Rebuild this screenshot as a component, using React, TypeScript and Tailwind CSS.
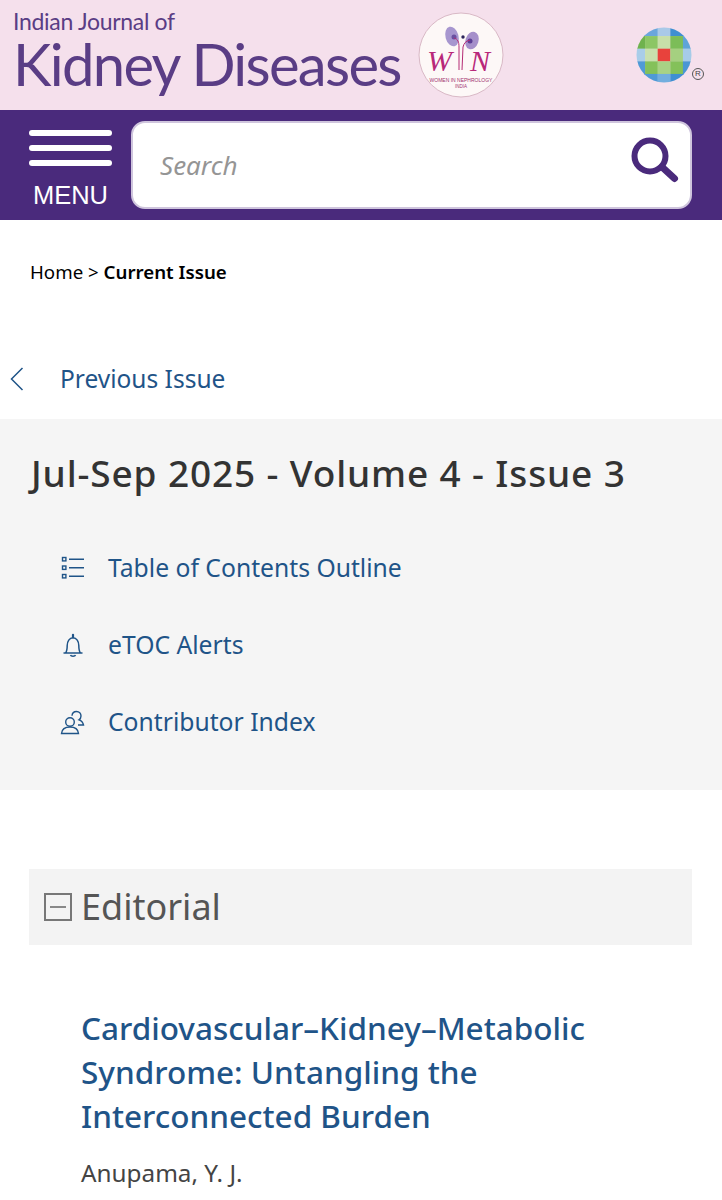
const links = [
  { label: 'Table of Contents Outline', icon: <ListIcon /> },
  { label: 'eTOC Alerts', icon: <BellIcon /> },
  { label: 'Contributor Index', icon: <PeopleIcon /> },
];

function ListIcon() {
  return (
    <svg width="24" height="24" viewBox="0 0 24 24" fill="none" stroke="#1f5488" strokeWidth="1.4">
      <rect x="1.500" y="1.500" width="3.400" height="3.400" />
      <rect x="1.500" y="10" width="3.400" height="3.400" />
      <rect x="1.500" y="18.500" width="3.400" height="3.400" />
      <path d="M8 3.200h15M8 11.700h15M8 20.200h15" />
    </svg>
  );
}

function BellIcon() {
  return (
    <svg width="24" height="26" viewBox="0 0 24 26" fill="none" stroke="#1f5488" strokeWidth="1.5">
      <path d="M2.500 21h19M4.500 21c1.500-1.800 1.700-4 1.700-7.500 0-4.200 2.200-7.700 5.800-7.700s5.800 3.500 5.800 7.700c0 3.500.2 5.700 1.700 7.500" />
      <path d="M12 5.500V2.800" strokeWidth="2.200" strokeLinecap="round" />
      <path d="M9.500 23c.5 1.700 4.500 1.700 5 0" />
    </svg>
  );
}

function PeopleIcon() {
  return (
    <svg width="26" height="26" viewBox="0 0 26 26" fill="none" stroke="#1f5488" strokeWidth="1.4">
      <circle cx="10" cy="13" r="4.300" />
      <path d="M1.500 24.500c.4-4 3-6.500 8.500-6.500s8.100 2.500 8.500 6.500z" />
      <path d="M12 6.800c.2-2.600 2-4.300 4.500-4.300 2.700 0 4.500 2 4.500 4.500 0 1.700-.8 3-2 3.800 2.600.8 4 2.600 4.500 5.200h-5.500" />
    </svg>
  );
}

function WinBadge() {
  return (
    <svg width="86" height="86" viewBox="0 0 86 86" className="shrink-0">
      <circle cx="43" cy="43" r="42" fill="#fdf8f7" stroke="#d9b9c6" strokeWidth="1" />
      <ellipse cx="34" cy="24.500" rx="6.500" ry="10" fill="#a796cf" transform="rotate(-15 34 24.500)" />
      <ellipse cx="54" cy="28.500" rx="6.500" ry="9" fill="#a58fca" transform="rotate(18 54 28.500)" />
      <circle cx="36" cy="25" r="2.500" fill="#6a4fa0" />
      <circle cx="52" cy="29" r="2.500" fill="#5b3f95" />
      <circle cx="45" cy="25" r="1.700" fill="#2b2359" />
      <path d="M36 26c4 1 5 4 5 9v23M52 28c-4 1-6 3-7 7l-1 23" fill="none" stroke="#b52b74" strokeWidth="1" />
      <text x="9" y="59" fill="#b8287a" fontSize="30" fontStyle="italic" fontFamily="Liberation Serif, serif">
        W
      </text>
      <text x="52" y="59" fill="#b8287a" fontSize="30" fontStyle="italic" fontFamily="Liberation Serif, serif">
        N
      </text>
      <text x="43" y="70" textAnchor="middle" fill="#a0306f" fontSize="5" fontFamily="Liberation Sans, sans-serif">
        WOMEN IN NEPHROLOGY
      </text>
      <text x="43" y="76" textAnchor="middle" fill="#a0306f" fontSize="4.500" fontFamily="Liberation Sans, sans-serif">
        INDIA
      </text>
    </svg>
  );
}

function Globe() {
  const rows = [
    ['#3f8fd2', '#6aa6dc', '#a9c9e8', '#3f8fd2', '#3f8fd2'],
    ['#6fb24e', '#8cc665', '#c7dfa9', '#7cbd58', '#5ea4d8'],
    ['#a9cde9', '#c9e0ae', '#e8423c', '#a5d080', '#a6cbe8'],
    ['#4f9ad6', '#84c15a', '#a8d285', '#84c15a', '#4a96d4'],
    ['#2c7cc4', '#4f9ad6', '#72aede', '#3f8fd2', '#2c7cc4'],
  ];
  return (
    <div className="relative">
      <svg width="56" height="56" viewBox="0 0 55 55">
        <defs>
          <clipPath id="globe-clip">
            <circle cx="27.500" cy="27.500" r="27" />
          </clipPath>
        </defs>
        <g clipPath="url(#globe-clip)">
          {rows.map((r, y) => r.map((c, x) => <rect key={x + '-' + y} x={x * 12.400 - 3.500} y={y * 12.400 - 3.500} width="12.600" height="12.600" fill={c} />))}
        </g>
      </svg>
      <span className="absolute -right-[12px] bottom-[3px] flex h-[12px] w-[12px] items-center justify-center rounded-full border border-[#555] text-[8px] leading-none text-[#444] font-['Liberation_Sans',sans-serif]">
        R
      </span>
    </div>
  );
}

export default function App() {
  return (
    <div className="min-h-[1200px] h-[1200px] overflow-hidden bg-white font-['Noto_Sans',sans-serif]">
      <header className="flex h-[110px] items-center justify-between bg-[#f5e0ec] pl-[13px] pr-[30px]">
        <div className="flex items-center gap-[17px]">
          <div className="w-[388px] font-['Lato',sans-serif] text-[#5a3d85]">
            <div className="mt-[-7px] text-[23px] leading-[24px] tracking-[-0.3px]">Indian Journal of</div>
            <div className="text-[58px] leading-[62px] tracking-[-1.7px] whitespace-nowrap">Kidney Diseases</div>
          </div>
          <WinBadge />
        </div>
        <Globe />
      </header>

      <nav className="flex h-[110px] items-center gap-[19px] bg-[#4a2a7c] pl-[29px] pr-[30px]">
        <button className="flex w-[83px] flex-col items-center pt-[9px]">
          <span className="flex w-full flex-col gap-[9px]">
            <span className="h-[6px] rounded-full bg-white" />
            <span className="h-[6px] rounded-full bg-white" />
            <span className="h-[6px] rounded-full bg-white" />
          </span>
          <span className="mt-[14px] font-['Liberation_Sans',sans-serif] text-[25.500px] leading-[30px] text-white">MENU</span>
        </button>
        <div className="flex h-[88px] flex-1 items-center justify-between rounded-[14px] border-2 border-[#cfc5dd] bg-white pl-[27px]">
          <span className="text-[26px] italic text-[#959595]">Search</span>
          <svg width="64" height="56" viewBox="0 0 64 56" fill="none" stroke="#4a2a7c" strokeWidth="6" strokeLinecap="round">
            <circle cx="24" cy="19" r="15.500" />
            <path d="M36 30l12.500 11.500" strokeWidth="7" />
          </svg>
        </div>
      </nav>

      <div className="pl-[30px] pt-[39px] text-[18.700px] leading-[26px] text-black">
        Home &gt; <span className="font-semibold">Current Issue</span>
      </div>

      <a className="mt-[74px] flex h-[40px] items-center text-[24.500px] text-[#1f5488]">
        <svg width="14" height="24" viewBox="0 0 14 24" fill="none" stroke="#1f5488" strokeWidth="1.500" className="ml-[10px]">
          <path d="M12.500 1L1.500 12l11 11" />
        </svg>
        <span className="ml-[36px]">Previous Issue</span>
      </a>

      <section className="mt-[20px] h-[371px] bg-[#f5f5f5] pl-[31px] pt-[30px]">
        <h1 className="text-[37px] font-medium leading-[48px] tracking-[0.87px] text-[#333]">Jul-Sep 2025 - Volume 4 - Issue 3</h1>
        <ul className="mt-[51px] flex flex-col gap-[37px] pl-[29px]">
          {links.map((l) => (
            <li key={l.label} className="flex h-[40px] items-center gap-[22px] text-[24.700px] text-[#1f5488]">
              <span className="flex w-[26px] justify-center">{l.icon}</span>
              {l.label}
            </li>
          ))}
        </ul>
      </section>

      <div className="ml-[29px] mr-[30px] mt-[79px] flex h-[76px] items-center gap-[9px] bg-[#f3f3f3] pl-[15px]">
        <span className="flex h-[28px] w-[28px] items-center justify-center border-2 border-[#777]">
          <span className="h-[2px] w-[16px] bg-[#888]" />
        </span>
        <h2 className="text-[36px] text-[#555]">Editorial</h2>
      </div>

      <article className="pl-[81px] pr-[100px] pt-[61px]">
        <h3 className="text-[31.500px] font-medium leading-[44px] text-[#1f5488]">
          Cardiovascular–Kidney–Metabolic Syndrome: Untangling the Interconnected Burden
        </h3>
        <p className="mt-[19px] text-[24.300px] leading-[32px] text-[#444]">Anupama, Y. J.</p>
      </article>
    </div>
  );
}
